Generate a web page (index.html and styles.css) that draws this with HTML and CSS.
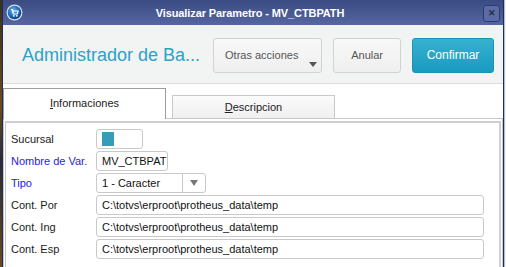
FILE: index.html
```html
<!DOCTYPE html>
<html lang="es">
<head>
  <meta charset="UTF-8" />
  <title>Visualizar Parametro - MV_CTBPATH</title>
  <link rel="stylesheet" href="styles.css">
</head>
<body>
  <div class="desk-left"></div>

  <div class="window">
    <div class="titlebar">
      <svg class="app-icon" width="17" height="17" viewBox="0 0 17 17">
        <defs>
          <radialGradient id="ico" cx="40%" cy="35%" r="65%">
            <stop offset="0" stop-color="#6fb6f0"/>
            <stop offset="0.6" stop-color="#1f6fc0"/>
            <stop offset="1" stop-color="#0c3f85"/>
          </radialGradient>
        </defs>
        <circle cx="8.5" cy="8.5" r="8" fill="#d8dde8"/>
        <circle cx="8.5" cy="8.5" r="6.8" fill="url(#ico)"/>
        <path d="M5 5.5h1.3l1 4.5h4l.8-3H7" fill="none" stroke="#fff" stroke-width="1.2"/>
        <circle cx="7.8" cy="11.8" r="0.9" fill="#fff"/>
        <circle cx="10.8" cy="11.8" r="0.9" fill="#fff"/>
      </svg>
      <span class="title">Visualizar Parametro - MV_CTBPATH</span>
      <span class="close">&#x2715;</span>
    </div>

    <div class="header">
      <h1>Administrador de Ba...</h1>
      <div class="actions">
        <button class="btn btn-menu">Otras acciones<span class="caret"></span></button>
        <button class="btn">Anular</button>
        <button class="btn btn-primary">Confirmar</button>
      </div>
    </div>

    <div class="content">
      <div class="tabs">
        <div class="tab active"><u>I</u>nformaciones</div>
        <div class="tab"><u>D</u>escripcion</div>
      </div>
      <div class="panel">
        <div class="form">
          <label>Sucursal</label>
          <div class="field field-sm"><span class="swatch"></span></div>

          <label class="req">Nombre de Var.</label>
          <div class="field field-md">MV_CTBPAT</div>

          <label class="req">Tipo</label>
          <div class="field combo">
            <span class="combo-text">1 - Caracter</span>
            <span class="combo-btn"><span class="arrow"></span></span>
          </div>

          <label>Cont. Por</label>
          <div class="field">C:\totvs\erproot\protheus_data\temp</div>

          <label>Cont. Ing</label>
          <div class="field">C:\totvs\erproot\protheus_data\temp</div>

          <label>Cont. Esp</label>
          <div class="field">C:\totvs\erproot\protheus_data\temp</div>
        </div>
      </div>
    </div>
  </div>

  <div class="desk-right"></div>
</body>
</html>
```

FILE: styles.css
```css
body {
  margin: 0;
  display: flex;
  height: 267px;
  overflow: hidden;
  font-family: 'Liberation Sans', Arial, sans-serif;
  font-size: 11px;
  color: #222;
  background: #fff;
}

.desk-left {
  width: 2px;
  background: linear-gradient(to bottom, #3b3020, #6b4a20 40%, #2b2b35 60%, #6b4a20);
}

.desk-right {
  flex: 1;
  background: #f4f4f4;
  border-left: 1px solid #b8bcc4;
}

.window {
  width: 500px;
  height: 267px;
  border-left: 1px solid #1d2e5c;
  border-right: 1px solid #1d2e5c;
  display: flex;
  flex-direction: column;
  background: #fff;
}

.titlebar {
  height: 25px;
  flex-shrink: 0;
  background: linear-gradient(to bottom, #3a4a82, #5666a1);
  display: flex;
  align-items: center;
  padding: 0 3px;
}

.app-icon {
  flex-shrink: 0;
}

.title {
  flex: 1;
  text-align: center;
  color: #fff;
  font-weight: bold;
  font-size: 11px;
  letter-spacing: -0.1px;
  padding-right: 6px;
}

.close {
  width: 15px;
  height: 15px;
  border: 1px solid #2b3b72;
  border-radius: 3px;
  background: #5b6ba5;
  color: #2a2d3a;
  font-size: 9px;
  font-weight: bold;
  display: flex;
  align-items: center;
  justify-content: center;
  margin-top: 1px;
}

.header {
  height: 58px;
  flex-shrink: 0;
  background: #f2f3f3;
  border-bottom: 1px solid #dcdcdc;
  display: flex;
  align-items: center;
  padding: 0 9px 0 19px;
}

h1 {
  flex: 1;
  margin: 0;
  font-weight: normal;
  font-size: 18px;
  color: #2aa3c6;
  padding-top: 2px;
}

.actions {
  display: flex;
  gap: 11px;
  padding-top: 2px;
}

.btn {
  height: 35px;
  border: 1px solid #d2d2d2;
  border-radius: 3px;
  background: linear-gradient(to bottom, #f8f8f8, #efefef);
  font-family: 'Liberation Sans', Arial, sans-serif;
  font-size: 11px;
  color: #555;
  padding: 0 17px;
  position: relative;
}

.btn-menu {
  width: 109px;
  padding: 0 12px 0 0;
}

.caret {
  position: absolute;
  right: 4px;
  bottom: 5px;
  border-left: 4px solid transparent;
  border-right: 4px solid transparent;
  border-top: 5px solid #555;
}

.btn-primary {
  width: 82px;
  padding: 0;
  border-color: #1b93b5;
  background: linear-gradient(to bottom, #38b0d0, #189bc0);
  color: #fff;
  font-size: 12px;
}

.content {
  flex: 1;
  min-height: 0;
  padding-top: 5px;
  display: flex;
  flex-direction: column;
}

.tabs {
  display: flex;
  align-items: flex-end;
  gap: 6px;
  height: 30px;
  flex-shrink: 0;
  margin-bottom: -1px;
  position: relative;
}

.tab {
  width: 161px;
  height: 22px;
  border: 1px solid #c8c8c8;
  border-bottom: none;
  background: linear-gradient(to bottom, #fbfbfb, #f0f0f0);
  text-align: center;
  line-height: 22px;
  margin-bottom: 1px;
}

.tab.active {
  height: 30px;
  line-height: 28px;
  border-color: #9d9d9d;
  background: #fff;
  margin-bottom: 0;
}

.panel {
  flex: 1;
  min-height: 0;
  border: 1px solid #c8c8c8;
  border-bottom: none;
  padding: 2px 1px 0 1px;
  display: flex;
}

.form {
  flex: 1;
  border: 1px solid #c8c8c8;
  border-right: 2px solid #cfcfcf;
  border-top: 2px solid #cfcfcf;
  border-bottom: none;
  padding: 6px 15px 0 5px;
  display: grid;
  grid-template-columns: 85px 1fr;
  grid-auto-rows: 20px;
  row-gap: 2px;
  align-content: start;
  align-items: center;
}

.form label {
  color: #1a1a1a;
}

.form label.req {
  color: #2424e0;
}

.field {
  height: 18px;
  border: 1px solid #c9c9c9;
  border-radius: 3px;
  background: #fff;
  padding: 0 0 0 5px;
  line-height: 18px;
  overflow: hidden;
  white-space: nowrap;
  color: #111;
}

.field-sm {
  width: 40px;
  display: flex;
  align-items: center;
}

.swatch {
  width: 12px;
  height: 14px;
  background: #379db6;
}

.field-md {
  width: 65px;
}

.combo {
  width: 108px;
  padding: 0;
  display: flex;
}

.combo-text {
  flex: 1;
  padding-left: 5px;
}

.combo-btn {
  width: 22px;
  border-left: 1px solid #c9c9c9;
  display: flex;
  align-items: center;
  justify-content: center;
}

.arrow {
  border-left: 4px solid transparent;
  border-right: 4px solid transparent;
  border-top: 6px solid #777;
}
```
